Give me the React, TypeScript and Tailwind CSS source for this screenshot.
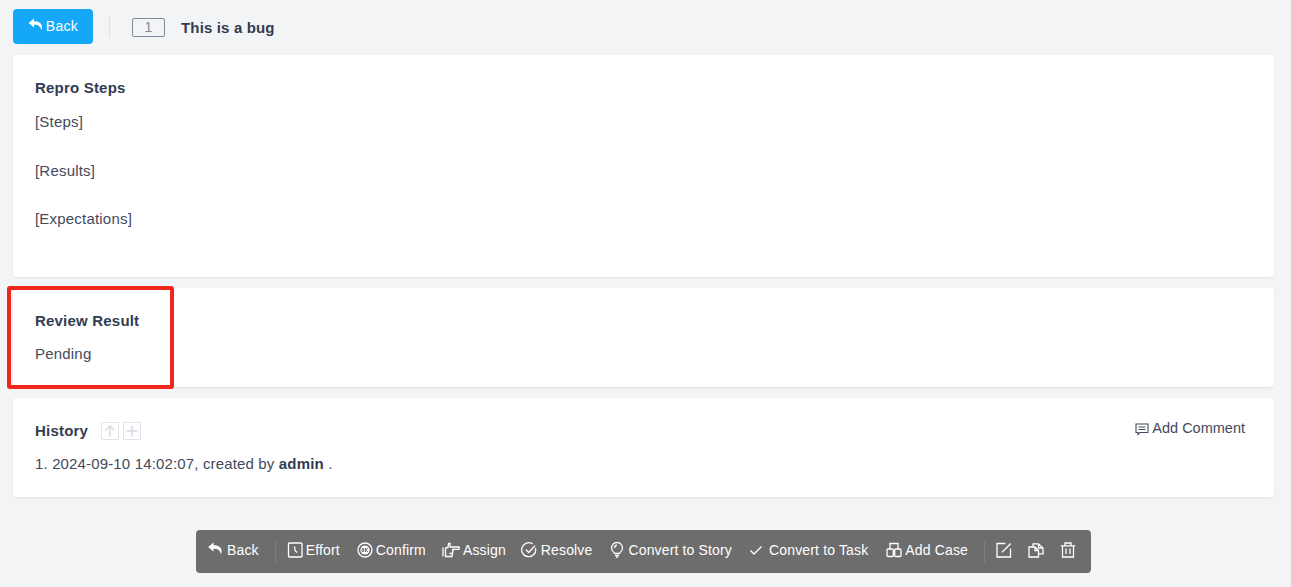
import type { ReactNode } from "react";

const Undo = ({ className = "" }: { className?: string }) => (
	<svg viewBox="0 0 16 14" className={className} fill="currentColor">
		<path d="M6.4 0.6 0.6 5.4l5.8 4.8V7.2c3.6-.3 5.8.6 7 3.4.4.9.7 1.8.9 2.4.6-1 .9-2.6.7-4.2C14.600 5.400 11 3.700 6.400 3.600z" />
	</svg>
);

const iconClass = "w-4 h-4 shrink-0";
const stroke = { fill: "none", stroke: "currentColor", strokeWidth: 1.3 };

const Effort = () => (
	<svg viewBox="0 0 16 16" className={iconClass} {...stroke}>
		<rect x="1.500" y="1" width="13.500" height="14" rx="1" />
		<path d="M7.500 4.500 8.300 9l2 1.500" />
	</svg>
);
const ConfirmIcon = () => (
	<svg viewBox="0 0 16 16" className={iconClass} {...stroke}>
		<circle cx="8" cy="8" r="7" />
		<circle cx="8" cy="8" r="4.600" fill="currentColor" stroke="none" />
		<path d="M5.200 6.500h1.500v3H5.200zM8.500 6v4M11 6 8.700 8l2.300 2" stroke="#6d6d6d" strokeWidth="1" />
	</svg>
);
const AssignIcon = () => (
	<svg viewBox="0 0 18 16" className="w-[18px] h-4 shrink-0" {...stroke}>
		<path d="M1 5.500v9M3.500 5.500v9h6.500l1-6h-1M3.500 6 6 5.500 6.500 1.500h1.500v3.500h9v2.300h-7M7.500 11.500h3" />
	</svg>
);
const ResolveIcon = () => (
	<svg viewBox="0 0 16 16" className={iconClass} {...stroke}>
		<path d="M14.500 6.200A7 7 0 1 1 11.700 2" />
		<path d="M4.800 7.500 7.700 10.500 14 3.800" />
	</svg>
);
const BulbIcon = () => (
	<svg viewBox="0 0 16 16" className={iconClass} {...stroke}>
		<path d="M5.700 11.500C4.600 10 2.500 8.800 2.500 6a5.500 5.500 0 0 1 11 0c0 2.800-2.100 4-3.200 5.500z" />
		<path d="M6 13.300h4M6.800 15h2.400M5.500 6a2.800 2.800 0 0 1 2.500-2.800" />
	</svg>
);
const CheckIcon = () => (
	<svg viewBox="0 0 16 16" className={iconClass} {...stroke}>
		<path d="M2.500 8.500 6 12l7.500-7.500" />
	</svg>
);
const CaseIcon = () => (
	<svg viewBox="0 0 16 16" className={iconClass} {...stroke}>
		<path d="M4 7V1.500h8V7" />
		<rect x="1" y="7" width="6.300" height="7.500" rx="1" />
		<rect x="8.700" y="7" width="6.300" height="7.500" rx="1" />
	</svg>
);
const EditIcon = () => (
	<svg viewBox="0 0 16 16" className={iconClass} {...stroke}>
		<path d="M9.500 1.500H1v13.500h13.500V6.500" />
		<path d="M6 10.200 14.800 1.500" />
	</svg>
);
const CopyIcon = () => (
	<svg viewBox="0 0 16 16" className={iconClass} {...stroke}>
		<path d="M5 5V1.800h5.500L15 6v5.800h-4.500M10.500 1.800V6H15" />
		<path d="M1 5h6l3.500 3.500V15H1zM7 5v3.500h3.500" />
	</svg>
);
const TrashIcon = () => (
	<svg viewBox="0 0 16 16" className={iconClass} {...stroke}>
		<path d="M.8 3.800h14.400M5 3.800V1h6v2.800M2.500 3.800V15h11V3.800M6 6.500v5.500M10 6.500v5.500" />
	</svg>
);

const Card = ({ className = "", children }: { className?: string; children: ReactNode }) => (
	<section className={`bg-white rounded shadow-[0_1px_2px_rgba(0,0,0,0.08)] px-[22px] ${className}`}>
		{children}
	</section>
);

const Title = ({ children }: { children: ReactNode }) => (
	<h2 className="font-bold text-[15px] leading-5 tracking-[0.2px] text-[#313c52]">{children}</h2>
);

const ToolItem = ({ icon, label, className = "" }: { icon: ReactNode; label: string; className?: string }) => (
	<button className={`flex items-center gap-[3px] text-sm tracking-[0.15px] whitespace-nowrap ${className}`}>
		{icon}
		{label}
	</button>
);

const App = () => {
	return (
		<main className="relative w-[1291px] h-[587px] overflow-hidden bg-[#f3f4f6] font-['Liberation_Sans',Arial,sans-serif] text-[15px] text-[#434a5a]">
			<header className="flex items-center h-[55px] pl-[13px] pb-[1px]">
				<button className="flex items-center justify-center gap-[3px] w-20 h-[35px] mb-[2px] rounded bg-[#16a8f8] text-white text-sm tracking-[0.3px]">
					<Undo className="w-[15px] h-[13px] mb-[4px]" />
					Back
				</button>
				<div className="w-px h-[22px] bg-[#dcdfe5] ml-4 mr-[22px]" />
				<span className="flex items-center justify-center w-[33px] h-[19px] rounded-[2px] border border-[#838a9d] text-[#838a9d] text-sm leading-none">
					1
				</span>
				<h1 className="ml-4 mt-[2px] font-bold text-[15px] tracking-[0.15px] text-[#313c52]">This is a bug</h1>
			</header>

			<div className="flex flex-col gap-[11px] mx-[13px] w-[1261px]">
				<Card className="h-[222px] pt-[23px]">
					<Title>Repro Steps</Title>
					<div className="mt-[12px] leading-[24.500px] tracking-[0.2px]">
						<p>[Steps]</p>
						<p className="mt-[24px]">[Results]</p>
						<p className="mt-[24px]">[Expectations]</p>
					</div>
				</Card>

				<Card className="h-[99px] pt-[23px]">
					<Title>Review Result</Title>
					<p className="mt-[13px] leading-5 tracking-[0.2px]">Pending</p>
				</Card>

				<Card className="h-[99px] pt-[23px]">
					<div className="flex items-center">
						<Title>History</Title>
						<div className="flex gap-[4px] ml-[13px] text-[#d5dae3]">
							<span className="flex items-center justify-center w-[18px] h-[18px] border border-[#e1e4ea] rounded-[1px]">
								<svg viewBox="0 0 12 12" className="w-3 h-3" fill="none" stroke="currentColor" strokeWidth="1.500">
									<path d="M6 11.500V1M1.500 5.500 6 1l4.500 4.500" />
								</svg>
							</span>
							<span className="flex items-center justify-center w-[18px] h-[18px] border border-[#e1e4ea] rounded-[1px]">
								<svg viewBox="0 0 12 12" className="w-3 h-3" fill="none" stroke="currentColor" strokeWidth="1.500">
									<path d="M6 .5v11M.5 6h11" />
								</svg>
							</span>
						</div>
						<button className="flex items-center gap-[3px] ml-auto mr-[7px] -mt-[5px] text-[14.500px]">
							<svg viewBox="0 0 14 14" className="w-[14px] h-[14px]" fill="none" stroke="currentColor" strokeWidth="1.100">
								<path d="M1 2h12v8.500H5l-2 2v-2H1zM3.500 5h7M3.500 7.500h7" />
							</svg>
							Add Comment
						</button>
					</div>
					<p className="mt-[13px] leading-5 tracking-[0.15px]">
						1. 2024-09-10 14:02:07, created by <strong className="font-bold tracking-[0.2px] text-[#313c52]">admin</strong> .
					</p>
				</Card>
			</div>

			<div className="absolute left-[7px] top-[286px] w-[167px] h-[103px] border-[4px] border-[#f1271b] rounded-[3px]" />

			<nav className="flex items-center gap-4 mt-[33px] ml-[196px] w-[895px] h-[43px] rounded bg-[#6d6d6d] pl-3 pb-1 text-white">
				<ToolItem icon={<Undo className="w-4 h-[13px] mb-[2px]" />} label="Back" className="-ml-[1px] gap-[4px]" />
				<div className="w-px h-[22px] mt-1 bg-[#7f7f7f] -mr-[5px]" />
				<ToolItem icon={<Effort />} label="Effort" />
				<ToolItem icon={<ConfirmIcon />} label="Confirm" className="ml-[1px]" />
				<ToolItem icon={<AssignIcon />} label="Assign" className="gap-[2px]" />
				<ToolItem icon={<ResolveIcon />} label="Resolve" className="-ml-[1px] gap-[4px]" />
				<ToolItem icon={<BulbIcon />} label="Convert to Story" className="ml-[1px] gap-[2px]" />
				<ToolItem icon={<CheckIcon />} label="Convert to Task" className="gap-[5px]" />
				<ToolItem icon={<CaseIcon />} label="Add Case" className="ml-[2px]" />
				<div className="w-px h-[22px] mt-1 bg-[#7f7f7f] -mr-[5px]" />
				<EditIcon />
				<CopyIcon />
				<TrashIcon />
			</nav>
		</main>
	);
};

export default App;
